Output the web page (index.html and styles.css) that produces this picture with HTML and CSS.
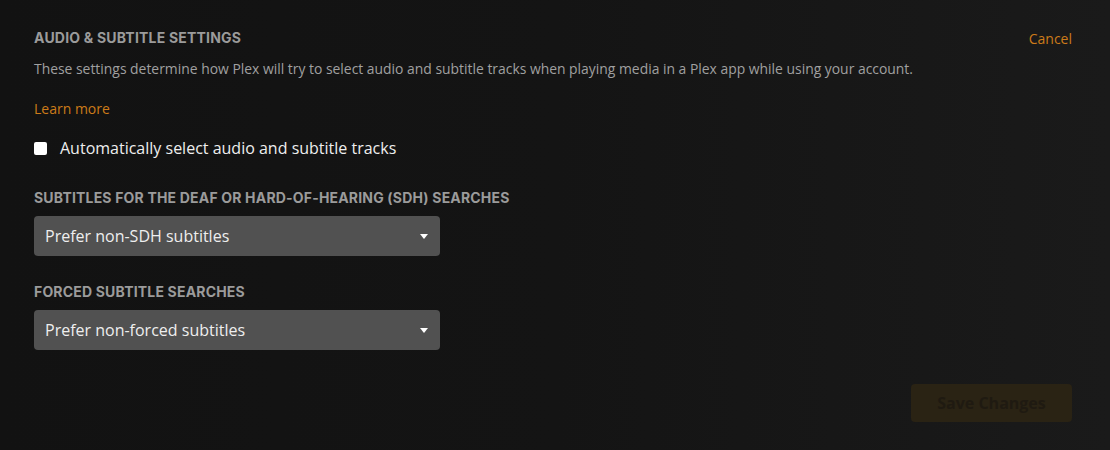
FILE: index.html
```html
<!DOCTYPE html>
<html>
<head>
<meta charset="utf-8">
<link rel="stylesheet" href="styles.css">
</head>
<body>
<div class="page">
  <div class="header">
    <h1 class="title">Audio &amp; Subtitle Settings</h1>
    <a class="cancel">Cancel</a>
  </div>
  <p class="desc">These settings determine how Plex will try to select audio and subtitle tracks when playing media in a Plex app while using your account.</p>
  <a class="learn">Learn more</a>
  <label class="check-row"><span class="box"></span><span class="check-label">Automatically select audio and subtitle tracks</span></label>
  <h2 class="field-title first">Subtitles for the Deaf or Hard-of-Hearing (SDH) Searches</h2>
  <div class="select"><span>Prefer non-SDH subtitles</span><span class="caret"></span></div>
  <h2 class="field-title">Forced Subtitle Searches</h2>
  <div class="select"><span>Prefer non-forced subtitles</span><span class="caret"></span></div>
  <div class="footer"><button class="save">Save Changes</button></div>
</div>
</body>
</html>
```
FILE: styles.css
```css
html, body {
  margin: 0;
  height: 100%;
}
body {
  background: linear-gradient(90deg, #121212 0%, #141414 50%, #1a1a1a 100%);
  font-family: "Open Sans", "Noto Sans", sans-serif;
  color: #eee;
  overflow: hidden;
}
.page {
  padding: 28px 38px 0 34px;
  display: flex;
  flex-direction: column;
  align-items: flex-start;
}
.header {
  align-self: stretch;
  display: flex;
  justify-content: space-between;
  align-items: flex-start;
}
.title {
  margin: 0;
  font-family: Inter, sans-serif;
  font-weight: 700;
  font-size: 14px;
  line-height: 20px;
  letter-spacing: 0.2px;
  text-transform: uppercase;
  color: #9b9b9b;
}
.cancel {
  font-size: 14px;
  line-height: 20px;
  color: #cc7b19;
  margin-top: 1px;
}
.desc {
  margin: 10px 0 0;
  font-size: 13.9px;
  line-height: 20px;
  color: #a0a0a0;
}
.learn {
  margin-top: 20px;
  font-size: 14px;
  line-height: 20px;
  color: #cc7b19;
}
.check-row {
  margin-top: 17px;
  display: flex;
  align-items: center;
  gap: 13px;
}
.box {
  width: 13px;
  height: 13px;
  background: #fff;
  border-radius: 2px;
}
.check-label {
  font-size: 16px;
  line-height: 24px;
  color: #eee;
}
.field-title {
  margin: 26px 0 8px;
  font-family: Inter, sans-serif;
  font-weight: 700;
  font-size: 14px;
  line-height: 20px;
  letter-spacing: 0.18px;
  text-transform: uppercase;
  color: #9b9b9b;
}
.field-title.first {
  margin-top: 28px;
}
.select {
  width: 406px;
  height: 40px;
  box-sizing: border-box;
  padding: 0 12px 0 11px;
  background: #515151;
  border-radius: 4px;
  display: flex;
  align-items: center;
  justify-content: space-between;
  font-size: 16px;
  color: #eee;
}
.caret {
  width: 0;
  height: 0;
  border-left: 4.5px solid transparent;
  border-right: 4.5px solid transparent;
  border-top: 5px solid #fff;
}
.footer {
  align-self: stretch;
  display: flex;
  justify-content: flex-end;
  margin-top: 34px;
}
.save {
  width: 161px;
  height: 38px;
  border: none;
  border-radius: 4px;
  background: #2a2314;
  color: #1f1a11;
  font-family: "Open Sans", sans-serif;
  font-weight: 700;
  font-size: 16px;
}
```
